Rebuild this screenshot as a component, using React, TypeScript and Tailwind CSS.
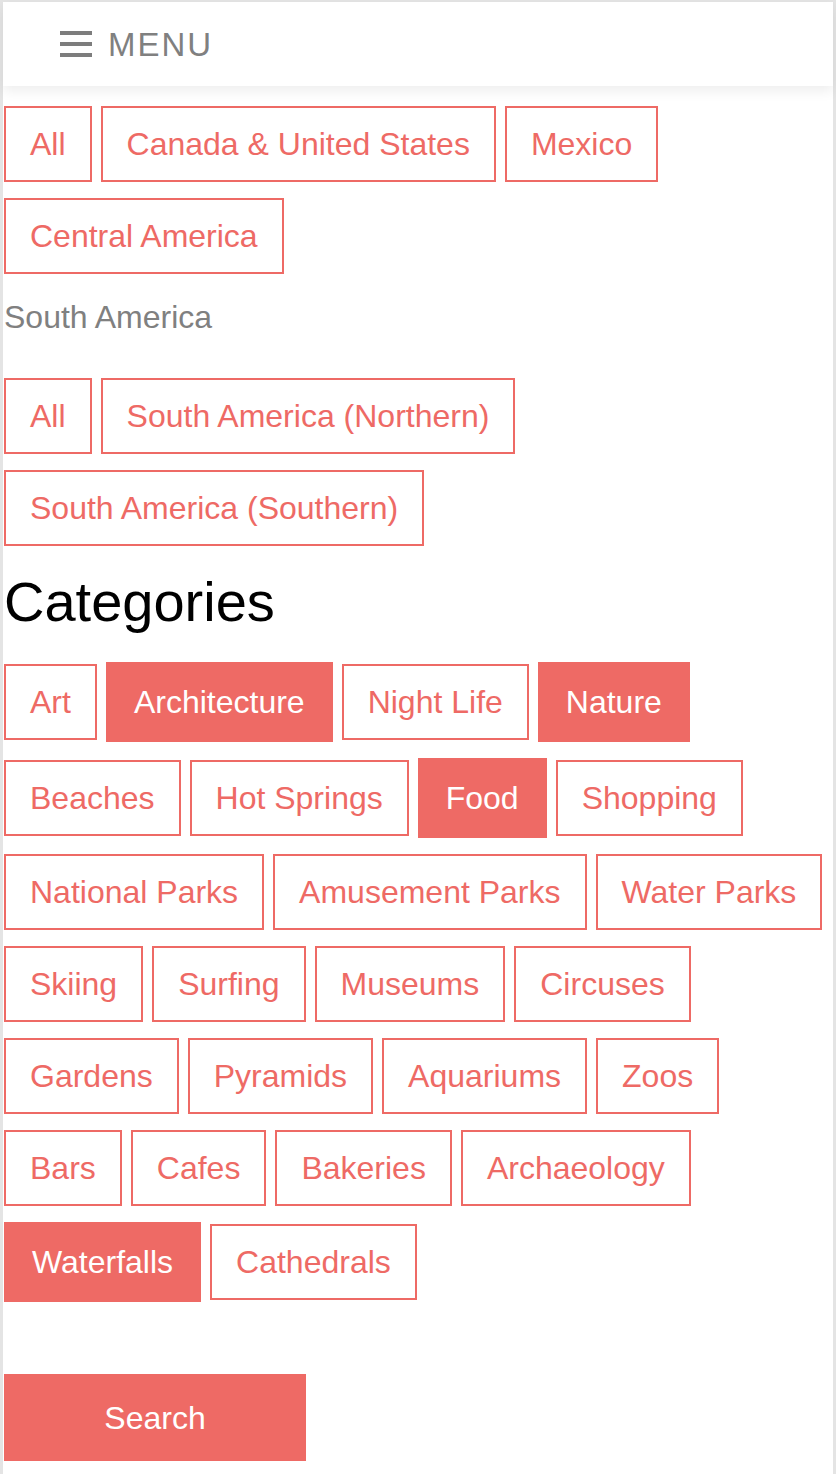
import React from "react";

// Filtros de região e categorias
const regionsTop = ["All", "Canada & United States", "Mexico", "Central America"];
const regionsSouth = ["All", "South America (Northern)", "South America (Southern)"];

const categories: { name: string; active?: boolean }[] = [
  { name: "Art" },
  { name: "Architecture", active: true },
  { name: "Night Life" },
  { name: "Nature", active: true },
  { name: "Beaches" },
  { name: "Hot Springs" },
  { name: "Food", active: true },
  { name: "Shopping" },
  { name: "National Parks" },
  { name: "Amusement Parks" },
  { name: "Water Parks" },
  { name: "Skiing" },
  { name: "Surfing" },
  { name: "Museums" },
  { name: "Circuses" },
  { name: "Gardens" },
  { name: "Pyramids" },
  { name: "Aquariums" },
  { name: "Zoos" },
  { name: "Bars" },
  { name: "Cafes" },
  { name: "Bakeries" },
  { name: "Archaeology" },
  { name: "Waterfalls", active: true },
  { name: "Cathedrals" },
];

const Tag = ({ label, active = false }: { label: string; active?: boolean }) =>
  active ? (
    <button className="h-[80px] px-[28px] bg-[#ee6a65] text-white text-[32px] flex items-center justify-center whitespace-nowrap">
      {label}
    </button>
  ) : (
    <button className="h-[76px] px-6 border-2 border-[#ee6a65] bg-white text-[#ee6a65] text-[32px] flex items-center justify-center whitespace-nowrap">
      {label}
    </button>
  );

const TagGroup = ({ children, className = "" }: { children: React.ReactNode; className?: string }) => (
  <div className={`flex flex-wrap items-center gap-x-[9px] gap-y-4 ${className}`}>{children}</div>
);

export default function App() {
  return (
    <div className="w-[836px] min-h-[1474px] bg-white border-l-[3px] border-r-[3px] border-t-2 border-[#e4e4e4] font-['Liberation_Sans',Arial,sans-serif]">
      {/* cabeçalho */}
      <header className="h-[84px] bg-white flex items-center pl-[57px] shadow-[0_5px_12px_rgba(0,0,0,0.07)] relative z-10">
        <div className="flex flex-col justify-between w-[32px] h-[26px]">
          <span className="block h-[4px] bg-[#7d7d7d]" />
          <span className="block h-[4px] bg-[#7d7d7d]" />
          <span className="block h-[4px] bg-[#7d7d7d]" />
        </div>
        <span className="ml-4 text-[33px] leading-none tracking-[2px] text-[#808080]">MENU</span>
      </header>

      <main className="pl-px">
        <TagGroup className="mt-5">
          {regionsTop.map((r) => (
            <Tag key={r} label={r} />
          ))}
        </TagGroup>

        <p className="mt-[25px] text-[32px] leading-[37px] text-[#808080]">South America</p>

        <TagGroup className="mt-[42px]">
          {regionsSouth.map((r) => (
            <Tag key={r} label={r} />
          ))}
        </TagGroup>

        <h2 className="mt-6 text-[56px] leading-[64px] text-black">Categories</h2>

        <TagGroup className="mt-[28px]">
          {categories.map((c) => (
            <Tag key={c.name} label={c.name} active={c.active} />
          ))}
        </TagGroup>

        <button className="mt-[72px] w-[302px] h-[87px] bg-[#ee6a65] text-white text-[32px] flex items-center justify-center">
          Search
        </button>
      </main>
    </div>
  );
}
